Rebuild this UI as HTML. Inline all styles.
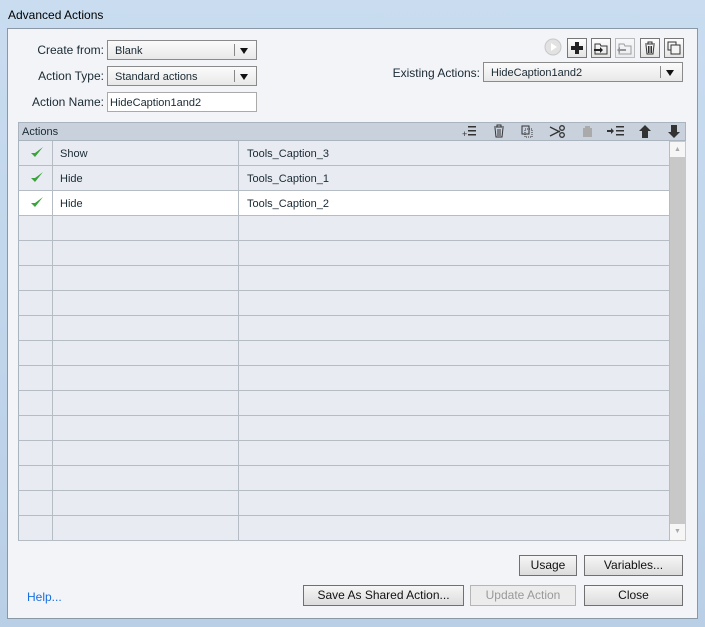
<!DOCTYPE html>
<html><head><meta charset="utf-8"><style>
*{margin:0;padding:0;box-sizing:border-box}
body{width:705px;height:627px;overflow:hidden;font-family:"Liberation Sans",sans-serif;font-size:12px;color:#1a2a33;background:linear-gradient(#c9dcf0,#b9cfe6);position:relative}
.a{position:absolute}
.title{left:8px;top:8px;font-size:12px;color:#000}
.panel{left:7px;top:28px;width:691px;height:591px;background:#f2f4f8;border:1px solid #8a97a5}
.lbl{text-align:right;font-size:12px}
.dd{background:linear-gradient(#fbfbfb,#e8e8e8);border:1px solid #8a8a8a;height:20px;padding:4px 7px;font-size:11px}
.dd:after{content:"";position:absolute;right:8px;top:7px;border:4px solid transparent;border-top:6px solid #111;border-bottom:0}
.dd i{position:absolute;right:21px;top:3px;width:1px;height:12px;background:#888}
.inp{background:#fff;border:1px solid #aaa;height:20px;padding:4px 2px;font-size:11px}
.tb{width:20px;height:20px;border:1px solid #777;background:linear-gradient(#fdfdfd,#e4e4e4)}
.hdr{left:18px;top:122px;width:668px;height:19px;background:#c9d2dc;border:1px solid #aab4bf;font-size:11px;padding:3px 3px}
.row{left:18px;width:651px;height:25px;background:#e8ecf2;border-bottom:1px solid #b5bcc4;border-left:1px solid #aab4bf}
.row .c1{position:absolute;left:33px;top:0;height:24px;border-left:1px solid #b5bcc4}
.row .c2{position:absolute;left:219px;top:0;height:24px;border-left:1px solid #b5bcc4}
.row span{position:absolute;top:7px;font-size:11px}
.btn{height:21px;border:1px solid #707070;background:linear-gradient(#f6f6f6,#dcdcdc);text-align:center;font-size:12px;line-height:19px;color:#111}
.chk{position:absolute;left:11px;top:5px}
.ic{fill:#333}
</style></head><body>
<div class="a title">Advanced Actions</div>
<div class="a panel"></div>
<div class="a lbl" style="left:20px;top:43px;width:84px">Create from:</div>
<div class="a dd" style="left:107px;top:40px;width:150px">Blank<i></i></div>
<div class="a lbl" style="left:20px;top:69px;width:84px">Action Type:</div>
<div class="a dd" style="left:107px;top:66px;width:150px">Standard actions<i></i></div>
<div class="a lbl" style="left:20px;top:95px;width:84px">Action Name:</div>
<div class="a inp" style="left:107px;top:92px;width:150px">HideCaption1and2</div>
<div class="a lbl" style="left:380px;top:66px;width:100px">Existing Actions:</div>
<div class="a dd" style="left:483px;top:62px;width:200px">HideCaption1and2<i></i></div>
<svg class="a" style="left:544px;top:38px" width="20" height="20"><circle cx="9" cy="9" r="8" fill="#e2e2e2" stroke="#c8c8c8"/><path d="M7 5l6 4-6 4z" fill="#fff"/></svg>
<div class="a tb" style="left:567px;top:38px"><svg width="18" height="18"><path d="M7 3h4v4h4v4h-4v4H7v-4H3V7h4z" fill="#222"/></svg></div>
<div class="a tb" style="left:591px;top:38px"><svg width="18" height="18"><path d="M3 5h5l1 2h6v8H3z" fill="none" stroke="#333"/><path d="M2 10h6V8l3 3-3 3v-2H2z" fill="#222"/></svg></div>
<div class="a tb" style="left:615px;top:38px;opacity:.45"><svg width="18" height="18"><path d="M3 5h5l1 2h6v8H3z" fill="none" stroke="#333"/><path d="M10 10H4V8l-3 3 3 3v-2h6z" fill="#222"/></svg></div>
<div class="a tb" style="left:640px;top:38px"><svg width="18" height="18"><path d="M4 5h10M7 5V3h4v2M5 6l1 9h6l1-9" fill="none" stroke="#333"/><path d="M7.5 7v7M9 7v7M10.5 7v7" stroke="#333"/></svg></div>
<div class="a tb" style="left:664px;top:38px"><svg width="18" height="18"><rect x="3" y="3" width="8" height="8" fill="none" stroke="#333"/><rect x="6" y="6" width="9" height="9" fill="#f4f4f4" stroke="#333"/></svg></div>
<div class="a hdr">Actions</div>
<svg class="a" style="left:460px;top:123px" width="226" height="17">
<g class="ic"><text x="2" y="14" font-size="9">+</text><path d="M8 3h8v1.5H8zM8 7h8v1.5H8zM8 11h8v1.5H8z"/></g>
<g fill="none" stroke="#333"><path d="M34 4h10M37 4V2h4v2M35 5l1 9h6l1-9M38 6v7M40 6v7"/></g>
<g fill="none" stroke="#333"><rect x="62" y="3" width="7" height="8"/><rect x="65" y="6" width="7" height="8" stroke-dasharray="1 1"/></g>
<g fill="none" stroke="#333" stroke-width="1.3"><circle cx="102" cy="5" r="2.3"/><circle cx="102" cy="12" r="2.3"/><path d="M90 4l10 5M90 13l10-5"/></g>
<g fill="#aaa"><rect x="123" y="5" width="9" height="9"/><rect x="125" y="3" width="5" height="3"/></g>
<g class="ic"><path d="M147 7h4V5l3 3-3 3V9h-4z"/><path d="M156 3h8v1.5h-8zM156 7h8v1.5h-8zM156 11h8v1.5h-8zM156 15h8"/></g>
<path d="M185 2l6 6h-3v7h-6V8h-3z" fill="#333"/>
<path d="M214 15l6-6h-3V2h-6v7h-3z" fill="#333"/>
</svg>
<div class="a" style="left:669px;top:141px;width:17px;height:400px;background:#c8c8c8;border-left:1px solid #bbb"></div>
<div class="a" style="left:670px;top:142px;width:15px;height:15px;background:#f6f6f6;color:#aaa;font-size:7px;text-align:center;line-height:15px">▲</div>
<div class="a" style="left:670px;top:524px;width:15px;height:16px;background:#f6f6f6;color:#aaa;font-size:7px;text-align:center;line-height:16px">▼</div>
<div class="a" style="left:18px;top:141px;width:651px;height:400px;border-bottom:1px solid #aab4bf">
</div>
<div id="rows"></div>
<script>
var d=[["Show","Tools_Caption_3"],["Hide","Tools_Caption_1"],["Hide","Tools_Caption_2"]],h="";
for(var i=0;i<16;i++){var r=d[i];h+='<div class="a row" style="top:'+(141+i*25)+'px;'+(i==2?'background:#fff':'')+'">'+(r?'<svg class="chk" width="14" height="13"><path d="M1 7l4 4 8-10-8 6z" fill="#3aa33a"/></svg><span style="left:41px">'+r[0]+'</span><span style="left:228px">'+r[1]+'</span>':'')+'<div class="c1"></div><div class="c2"></div></div>';}
document.getElementById("rows").innerHTML=h;
</script>
<div class="a btn" style="left:519px;top:555px;width:58px">Usage</div>
<div class="a btn" style="left:584px;top:555px;width:99px">Variables...</div>
<div class="a btn" style="left:303px;top:585px;width:161px">Save As Shared Action...</div>
<div class="a btn" style="left:470px;top:585px;width:106px;color:#999;border-color:#b5b5b5;background:#ececec">Update Action</div>
<div class="a btn" style="left:584px;top:585px;width:99px">Close</div>
<div class="a" style="left:27px;top:590px;color:#1a6fe0">Help...</div>
</body></html>
